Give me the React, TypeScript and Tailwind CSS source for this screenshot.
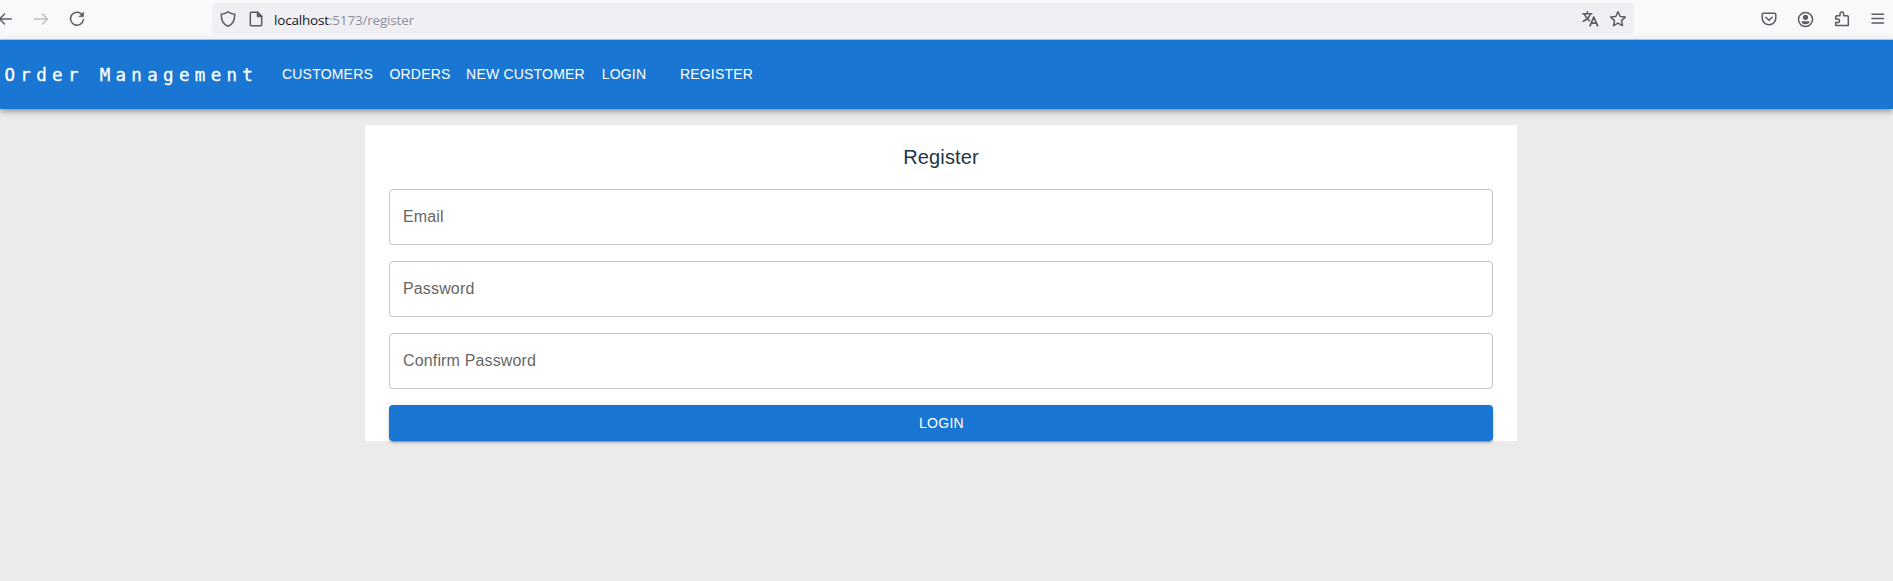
import React from "react";

const stroke = {
  fill: "none",
  stroke: "currentColor",
  strokeWidth: 1.5,
  strokeLinecap: "round" as const,
  strokeLinejoin: "round" as const,
};

function Icon({ className, children }: { className: string; children: React.ReactNode }) {
  return (
    <svg className={`h-4 w-4 shrink-0 overflow-visible ${className}`} viewBox="0 0 16 16" {...stroke}>
      {children}
    </svg>
  );
}

function BrowserBar() {
  return (
    <div className="flex h-10 items-start border-b border-[#cccccf] bg-[#f9f9fb] text-[#5b5b66]">
      <Icon className="-ml-1 mt-[11px]">
        <path d="M15.3 8H3.500M8.500 3 3.500 8l5 5" />
      </Icon>
      <Icon className="ml-[21px] mt-[11px] text-[#bdbdc3]">
        <path d="M1.500 8h13M9.500 3l5 5-5 5" />
      </Icon>
      <Icon className="ml-5 mt-[11px]">
        <path d="M12.800 3.200A6.500 6.500 0 1 0 14.500 8.500" />
        <path d="M14.600 1.200v4.600H10z" fill="currentColor" strokeWidth="0.5" />
      </Icon>
      <div className="ml-[127px] mt-[3px] flex h-8 w-[1422px] items-center rounded-[4px] bg-[#f0f0f4] pl-2">
        <Icon className="">
          <path d="M8 .8C9.500 2.200 12 3 14.700 3.200 14.900 9 13 13.300 8 15.300 3 13.300 1.100 9 1.300 3.200 4 3 6.500 2.200 8 .8z" />
        </Icon>
        <Icon className="ml-3">
          <path d="M3.500 1.200h6L13.700 5.400v8.100a1.200 1.200 0 0 1-1.200 1.200h-9a1.200 1.200 0 0 1-1.200-1.200V2.400a1.200 1.200 0 0 1 1.200-1.200z" />
          <path d="M9.500 1.200v4.200h4.200z" fill="currentColor" />
        </Icon>
        <span className="ml-[10px] mt-[2px] whitespace-nowrap font-['Open_Sans',sans-serif] text-[13.5px] tracking-[-0.18px] text-[#8f8f9d]">
          <span className="text-[#15141a]">localhost</span>:5173/register
        </span>
        <Icon className="ml-auto">
          <path d="M.8 2.800h9M5.300 .8v2M1.300 10.300C5 8.500 7.500 6 8.300 3M2.500 3.300C3.500 6 5 8 7.300 9.700" strokeWidth="1.6" />
          <path d="M8 14.800 11.800 6l3.800 8.800M9.300 12.200h5" strokeWidth="1.7" />
        </Icon>
        <Icon className="ml-3 mr-2">
          <path d="m8 .8 2.200 4.700 5.100.6-3.800 3.500 1 5.100L8 12.200l-4.500 2.500 1-5.100L.7 6.100l5.100-.6z" />
        </Icon>
      </div>
      <Icon className="ml-[127px] mt-[11px]">
        <path d="M2.400 2.300h11.200a1.200 1.200 0 0 1 1.200 1.200V7A6.800 6.800 0 0 1 1.200 7V3.500a1.200 1.200 0 0 1 1.200-1.200zM4.800 6.300 8 9.300l3.200-3" />
      </Icon>
      <Icon className="ml-5 mt-[11px]">
        <circle cx="8.500" cy="8.500" r="7" />
        <circle cx="8.500" cy="6.300" r="2.600" fill="currentColor" stroke="none" />
        <path d="M4.500 10.300h8a4 3 0 0 1-8 0z" fill="currentColor" stroke="none" />
      </Icon>
      <Icon className="ml-[21px] mt-[11px]">
        <path d="M1.700 8V5.800a1 1 0 0 1 1-1h3.300V2.700a1.800 1.800 0 0 1 3.600 0v2.100h3.700a1 1 0 0 1 1 1v8.800H1.700v-3h2a1.800 1.800 0 0 0 0-3.600z" />
      </Icon>
      <Icon className="ml-5 mt-[11px]">
        <path d="M2 3.300h11.500M2 7.600h11.500M2 12h11.500" />
      </Icon>
    </div>
  );
}

function NavButton({ label, className }: { label: string; className: string }) {
  return (
    <button className={`h-9 shrink-0 whitespace-nowrap text-center text-[14px] tracking-[0.2px] ${className}`}>
      {label}
    </button>
  );
}

function Field({ label }: { label: string }) {
  return (
    <div className="flex h-14 items-center rounded-[4px] border border-[#c4c4c4] px-[13px] text-[16px] tracking-[0.15px] text-[#666666]">
      {label}
    </div>
  );
}

export default function App() {
  return (
    <div className="h-[581px] overflow-hidden bg-[#ebebeb] font-['Liberation_Sans',Arial,sans-serif]">
      <BrowserBar />
      <header className="flex h-[69px] items-center bg-[#1976d2] text-white shadow-[0px_2px_4px_-1px_rgba(0,0,0,0.2),0px_4px_5px_0px_rgba(0,0,0,0.14),0px_1px_10px_0px_rgba(0,0,0,0.12)]">
        <span className="mt-[2px] w-[274px] whitespace-nowrap pl-[4.5px] font-['DejaVu_Sans_Mono',monospace] text-[17.5px] tracking-[5.32px] [-webkit-text-stroke:0.3px_white]">
          Order Management
        </span>
        <NavButton label="CUSTOMERS" className="w-[107px]" />
        <NavButton label="ORDERS" className="w-[78px]" />
        <NavButton label="NEW CUSTOMER" className="w-[133px]" />
        <NavButton label="LOGIN" className="w-16" />
        <NavButton label="REGISTER" className="ml-4 w-[89px]" />
      </header>
      <main className="ml-[365px] mt-4 flex h-[316px] w-[1152px] flex-col gap-4 bg-white px-6 pt-4">
        <h1 className="h-8 text-center text-[20px] leading-8 tracking-[0.15px] text-[#213547]">Register</h1>
        <Field label="Email" />
        <Field label="Password" />
        <Field label="Confirm Password" />
        <button className="h-9 shrink-0 rounded-[4px] bg-[#1976d2] pl-px text-[14px] tracking-[0.25px] text-white shadow-[0px_3px_1px_-2px_rgba(0,0,0,0.2),0px_2px_2px_0px_rgba(0,0,0,0.14),0px_1px_5px_0px_rgba(0,0,0,0.12)]">
          LOGIN
        </button>
      </main>
    </div>
  );
}
